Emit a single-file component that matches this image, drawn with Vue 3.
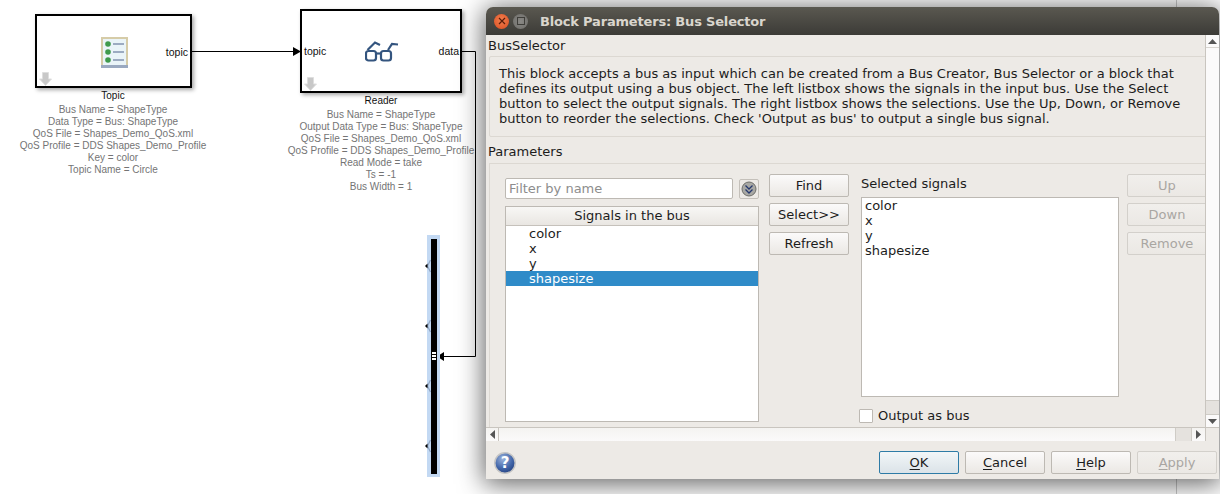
<script setup>
const topicLines = ['Bus Name = ShapeType', 'Data Type = Bus: ShapeType', 'QoS File = Shapes_Demo_QoS.xml', 'QoS Profile = DDS Shapes_Demo_Profile', 'Key = color', 'Topic Name = Circle']
const readerLines = ['Bus Name = ShapeType', 'Output Data Type = Bus: ShapeType', 'QoS File = Shapes_Demo_QoS.xml', 'QoS Profile = DDS Shapes_Demo_Profile', 'Read Mode = take', 'Ts = -1', 'Bus Width = 1']
const signals = ['color', 'x', 'y', 'shapesize']
const ticks = [1, 2, 3, 4]
</script>

<template>
  <div class="desk">
    <!-- diagram canvas -->
    <div class="block topic-block">
      <svg class="drop" width="13" height="14" viewBox="0 0 13 14"><path d="M3.500 .5h6v6.500h3L6.500 13.500.5 7h3z" fill="#c8c8c8" stroke="#dedede"/></svg>
      <svg class="doc" width="27" height="31" viewBox="0 0 27 31">
        <rect x="0" y="0" width="27" height="31" fill="#d6cca8"/>
        <rect x="2" y="2" width="23" height="27" fill="#eaf4f8"/>
        <rect x="0" y="28" width="27" height="3" fill="#9aa9c0"/>
        <circle cx="7" cy="7" r="2.800" fill="#3f9a4c"/><circle cx="7" cy="15" r="2.800" fill="#3f9a4c"/><circle cx="7" cy="23" r="2.800" fill="#3f9a4c"/>
        <path d="M12 7h11M12 15h11M12 23h11" stroke="#8292ae" stroke-width="1.400"/>
      </svg>
      <span class="port-out">topic</span>
    </div>
    <div class="caption topic-cap">
      <div class="name">Topic</div>
      <div v-for="l in topicLines" :key="l">{{ l }}</div>
    </div>

    <div class="block reader-block">
      <svg class="drop" width="13" height="14" viewBox="0 0 13 14"><path d="M3.500 .5h6v6.500h3L6.500 13.500.5 7h3z" fill="#c8c8c8" stroke="#dedede"/></svg>
      <svg class="glasses" width="34" height="21" viewBox="0 0 34 21" fill="none" stroke="#34557f" stroke-width="2.200">
        <path d="M2.500 9 10 1.500l5 2.500M23 9l4-6 6 .500"/>
        <rect x="1" y="10" width="10" height="9.500" rx="2.500"/>
        <rect x="16" y="10" width="10" height="9.500" rx="2.500"/>
        <path d="M11 12.500h5"/>
      </svg>
      <span class="port-in">topic</span>
      <span class="port-out">data</span>
    </div>
    <div class="caption reader-cap">
      <div class="name">Reader</div>
      <div v-for="l in readerLines" :key="l">{{ l }}</div>
    </div>

    <svg class="wires" width="490" height="494" viewBox="0 0 490 494" fill="none">
      <path d="M190 51.500H294" stroke="#000"/>
      <path d="M293 47l8 4.500-8 4.500z" fill="#000"/>
      <path d="M462 51.500H475.500V356.500H443" stroke="#000"/>
      <path d="M444 352l-7 4.500 7 4.500z" fill="#000"/>
    </svg>

    <div class="selector">
      <div class="bar"></div>
      <svg v-for="n in ticks" :key="n" class="tick" :class="'t' + n" width="8" height="14" viewBox="0 0 8 14" fill="none">
        <path d="M5.500 1 2.500 7l3 6" stroke="#90a6c4" stroke-width="1.200"/>
        <path d="M0 7l2.500-2.500v5z" fill="#000"/>
      </svg>
      <div class="inport"><i></i><i></i><i></i></div>
    </div>

    <div class="rightbar"></div>

    <!-- dialog window -->
    <div class="window">
      <div class="titlebar">
        <span class="wbtn close">
          <svg width="8" height="8" viewBox="0 0 8 8"><path d="M1 1l6 6M7 1l-6 6" stroke="#5a1c0a" stroke-width="1.200"/></svg>
        </span>
        <span class="wbtn max"><i></i></span>
        <span class="wtitle">Block Parameters: Bus Selector</span>
      </div>

      <div class="viewport">
        <div class="content">
          <div class="section-label">BusSelector</div>
          <div class="desc">This block accepts a bus as input which can be created from a Bus Creator, Bus Selector or a block that defines its output using a bus object. The left listbox shows the signals in the input bus. Use the Select button to select the output signals. The right listbox shows the selections. Use the Up, Down, or Remove button to reorder the selections. Check 'Output as bus' to output a single bus signal.</div>
          <div class="section-label params-label">Parameters</div>
          <div class="params">
            <div class="col-left">
              <div class="filter-row">
                <div class="filter">Filter by name</div>
                <span class="chev">
                  <svg width="16" height="16" viewBox="0 0 16 16">
                    <circle cx="8" cy="8" r="7" fill="#a8a8a4" stroke="#6e6e6a"/>
                    <path d="M4.500 4.500 8 8l3.500-3.500M4.500 8.500 8 12l3.500-3.500" fill="none" stroke="#26386e" stroke-width="1.300"/>
                  </svg>
                </span>
              </div>
              <div class="listbox left-list">
                <div class="list-head">Signals in the bus</div>
                <div v-for="s in signals" :key="s" class="sig" :class="{ sel: s === 'shapesize' }">{{ s }}</div>
              </div>
            </div>
            <div class="col-mid">
              <button class="btn small">Find</button>
              <button class="btn small">Select&gt;&gt;</button>
              <button class="btn small">Refresh</button>
            </div>
            <div class="col-sel">
              <div class="sel-label">Selected signals</div>
              <div class="listbox sel-list">
                <div v-for="s in signals" :key="s" class="sel-item">{{ s }}</div>
              </div>
              <label class="check"><span class="box"></span><span class="check-text">Output as bus</span></label>
            </div>
            <div class="col-right">
              <button class="btn small off">Up</button>
              <button class="btn small off">Down</button>
              <button class="btn small off">Remove</button>
            </div>
          </div>
        </div>
        <div class="vscroll">
          <span class="vup"><svg width="9" height="5" viewBox="0 0 9 5"><path d="M0 5h9L4.500 0z" fill="#555"/></svg></span>
          <span class="vtrack"></span>
          <span class="vthumb"></span>
          <span class="varrow"><svg width="9" height="5" viewBox="0 0 9 5"><path d="M0 0h9L4.500 5z" fill="#555"/></svg></span>
        </div>
      </div>
      <div class="hscroll">
        <span class="harrow left"><svg width="5" height="9" viewBox="0 0 5 9"><path d="M5 0v9L0 4.500z" fill="#555"/></svg></span>
        <span class="htrack"></span>
        <span class="hthumb"></span>
        <span class="harrow right"><svg width="5" height="9" viewBox="0 0 5 9"><path d="M0 0v9l5-4.500z" fill="#555"/></svg></span>
        <span class="hend"></span>
      </div>
      <div class="footer">
        <svg class="help" width="22" height="22" viewBox="0 0 22 22">
          <defs>
            <radialGradient id="hg" cx="40%" cy="30%" r="75%"><stop offset="0" stop-color="#9db4dc"/><stop offset="0.6" stop-color="#4468ab"/><stop offset="1" stop-color="#23407f"/></radialGradient>
          </defs>
          <circle cx="11" cy="11" r="10.200" fill="url(#hg)" stroke="#c4c4c4" stroke-width="1.500"/>
          <text x="11" y="16" text-anchor="middle" class="q">?</text>
        </svg>
        <div class="footer-btns">
          <button class="btn foot ok"><u>O</u>K</button>
          <button class="btn foot"><u>C</u>ancel</button>
          <button class="btn foot"><u>H</u>elp</button>
          <button class="btn foot off"><u>A</u>pply</button>
        </div>
      </div>
    </div>
  </div>
</template>

<style>
html, body { margin: 0; background: #fff; overflow: hidden; }
</style>

<style scoped>
.desk {
  position: relative;
  width: 1220px;
  height: 494px;
  overflow: hidden;
  background: #fff;
  font-family: "Liberation Sans", Arial, sans-serif;
}
.block {
  position: absolute;
  box-sizing: border-box;
  background: #fff;
  border: 2px solid #000;
  box-shadow: 2px 2px 4px rgba(0,0,0,.35);
  font-size: 10.500px;
  color: #111;
}
.topic-block { left: 35px; top: 14px; width: 157px; height: 74px; }
.reader-block { left: 300px; top: 9px; width: 162px; height: 84px; }
.drop { position: absolute; left: 2px; bottom: 0; }
.doc { position: absolute; left: 64px; top: 21px; }
.glasses { position: absolute; left: 63px; top: 30px; }
.port-out { position: absolute; right: 2px; top: 30px; }
.reader-block .port-out { right: 1px; top: 34px; }
.port-in { position: absolute; left: 2px; top: 34px; }
.caption {
  position: absolute;
  text-align: center;
  font-size: 10px;
  line-height: 12px;
  color: #747474;
  white-space: nowrap;
}
.caption .name { color: #111; line-height: 16px; }
.topic-cap { left: 0; width: 226px; top: 88px; }
.reader-cap { left: 268px; width: 226px; top: 93px; }
.wires { position: absolute; left: 0; top: 0; pointer-events: none; }
.selector {
  position: absolute;
  left: 427px;
  top: 235px;
  width: 13px;
  height: 242px;
  background: #c3d9f3;
}
.bar { position: absolute; left: 4px; top: 4px; width: 6px; height: 235px; background: #000; }
.tick { position: absolute; left: -2px; }
.t1 { top: 24px; } .t2 { top: 84px; } .t3 { top: 144px; } .t4 { top: 204px; }
.inport { position: absolute; left: 5px; top: 117px; display: flex; flex-direction: column; gap: 1px; }
.inport i { display: block; width: 4px; height: 2px; background: #fff; }
.rightbar {
  position: absolute;
  left: 1176px;
  top: 0;
  width: 44px;
  height: 494px;
  border-left: 1px solid #c9c9c9;
  box-sizing: border-box;
  background: #fff;
}
.window {
  position: absolute;
  left: 486px;
  top: 7px;
  width: 733px;
  height: 472px;
  background: #edeae6;
  border-radius: 7px 7px 0 0;
  box-shadow: 0 3px 26px 2px rgba(0,0,0,.62);
  display: flex;
  flex-direction: column;
  font-family: "DejaVu Sans", sans-serif;
  font-size: 13px;
  color: #1c1c1c;
}
.titlebar {
  height: 28px;
  flex: none;
  background: linear-gradient(#5a5850, #3c3b37);
  border-radius: 7px 7px 0 0;
  display: flex;
  align-items: center;
  padding-left: 8px;
  box-sizing: border-box;
}
.wbtn {
  width: 15px;
  height: 15px;
  border-radius: 50%;
  display: flex;
  align-items: center;
  justify-content: center;
  margin-right: 4px;
}
.close { background: radial-gradient(circle at 50% 40%, #f08050, #dd4c1f); }
.max { background: radial-gradient(circle, #8a8986, #6d6c68); }
.max i { display: block; width: 6px; height: 6px; border: 1px solid #3f3e3a; }
.wtitle {
  margin-left: 8px;
  color: #d9d5cd;
  font-weight: 700;
  font-size: 13px;
  letter-spacing: -.18px;
}
.viewport {
  height: 392px;
  flex: none;
  display: flex;
  overflow: hidden;
}
.content { flex: none; width: 719px; padding-left: 3px; box-sizing: border-box; overflow: hidden; }
.section-label { line-height: 21px; margin-left: -1px; }
.desc {
  box-sizing: border-box;
  height: 81px;
  width: 722px;
  padding: 9px 10px 0 9px;
  line-height: 15px;
  border: 1px solid #dcd8d2;
  border-radius: 2px;
  font-size: 13px;
}
.params-label { margin-top: 4px; line-height: 22px; }
.params {
  box-sizing: border-box;
  border-top: 1px solid #dcd8d2;
  border-left: 1px solid #dcd8d2;
  width: 730px;
  height: 270px;
  padding: 10px 0 0 15px;
  display: flex;
}
.col-left { width: 254px; flex: none; }
.filter-row { display: flex; align-items: center; gap: 6px; margin-top: 4px; }
.filter {
  box-sizing: border-box;
  width: 228px;
  height: 21px;
  border: 1px solid #bdb9b3;
  border-radius: 2px;
  background: #fff;
  color: #8d8d8d;
  line-height: 19px;
  padding-left: 3px;
}
.chev {
  width: 20px;
  height: 20px;
  box-sizing: border-box;
  border: 1px solid #c4c0ba;
  border-radius: 2px;
  display: flex;
  align-items: center;
  justify-content: center;
}
.listbox { box-sizing: border-box; background: #fff; border: 1px solid #bdb9b3; }
.left-list { margin-top: 7px; height: 216px; }
.list-head {
  height: 18px;
  line-height: 18px;
  text-align: center;
  background: linear-gradient(#f8f7f5, #e9e6e2);
  border-bottom: 1px solid #c5c1bb;
}
.sig { height: 15px; line-height: 15px; padding-left: 23px; }
.sig.sel { background: #2f8bc8; color: #fff; }
.col-mid { flex: none; width: 100px; padding-left: 10px; box-sizing: border-box; display: flex; flex-direction: column; gap: 6px; }
.btn {
  box-sizing: border-box;
  font-family: "DejaVu Sans", sans-serif;
  font-size: 13px;
  color: #1c1c1c;
  border: 1px solid #bdb9b3;
  border-radius: 2px;
  background: linear-gradient(#fbfafa, #ebe8e4);
  padding: 0;
}
.btn u { text-underline-offset: 2px; }
.small { width: 80px; height: 23px; }
.col-sel { flex: none; width: 268px; padding-left: 2px; box-sizing: border-box; }
.sel-label { line-height: 19px; }
.sel-list { width: 258px; height: 200px; margin-top: 4px; padding: 0 0 0 3px; }
.sel-item { height: 15px; line-height: 15px; }
.check { display: flex; align-items: center; margin-top: 12px; margin-left: -2px; height: 14px; }
.check-text { line-height: 12px; }
.box { box-sizing: border-box; width: 14px; height: 14px; border: 1px solid #bdb9b3; background: #fff; margin-right: 5px; border-radius: 1px; }
.col-right { flex: none; display: flex; flex-direction: column; gap: 6px; }
.off { color: #a9a6a2; border-color: #d3d0cb; background: linear-gradient(#f1efec, #ebe8e4); }
.vscroll {
  flex: 1;
  display: flex;
  flex-direction: column;
  background: #fbfafa;
  border-left: 1px solid #c9c5bf;
}
.vup { height: 13px; flex: none; box-sizing: border-box; border-bottom: 1px solid #d8d5d0; display: flex; align-items: center; justify-content: center; }
.vtrack { flex: 1; }
.vthumb { height: 14px; flex: none; box-sizing: border-box; background: #e5e2de; border-top: 1px solid #cfccc6; }
.varrow { height: 13px; flex: none; box-sizing: border-box; border-top: 1px solid #cfccc6; display: flex; align-items: center; justify-content: center; }
.hscroll {
  height: 14px;
  flex: none;
  box-sizing: border-box;
  display: flex;
  align-items: center;
  background: linear-gradient(#f4f3f1, #fbfafa);
  border-top: 1px solid #c9c5bf;
}
.harrow { width: 13px; display: flex; justify-content: center; flex: none; box-sizing: border-box; }
.harrow.left { border-right: 1px solid #c9c5bf; height: 100%; align-items: center; }
.htrack { flex: 1; }
.hthumb { width: 17px; height: 100%; flex: none; box-sizing: border-box; background: #e5e2de; border-left: 1px solid #cfccc6; border-right: 1px solid #cfccc6; }
.harrow.right { height: 100%; align-items: center; }
.hend { width: 14px; flex: none; height: 100%; box-sizing: border-box; border-left: 1px solid #c9c5bf; background: #edeae6; }
.footer { flex: 1; display: flex; align-items: center; padding: 5px 2px 0 8px; }
.help { flex: none; }
.q { font: 700 15px "DejaVu Sans", sans-serif; fill: #fff; }
.footer-btns { margin-left: auto; display: flex; gap: 6px; }
.foot { width: 80px; height: 23px; }
.ok { border-color: #2e7ba6; background: linear-gradient(#f2f6f8, #dbe3e8); }
</style>
